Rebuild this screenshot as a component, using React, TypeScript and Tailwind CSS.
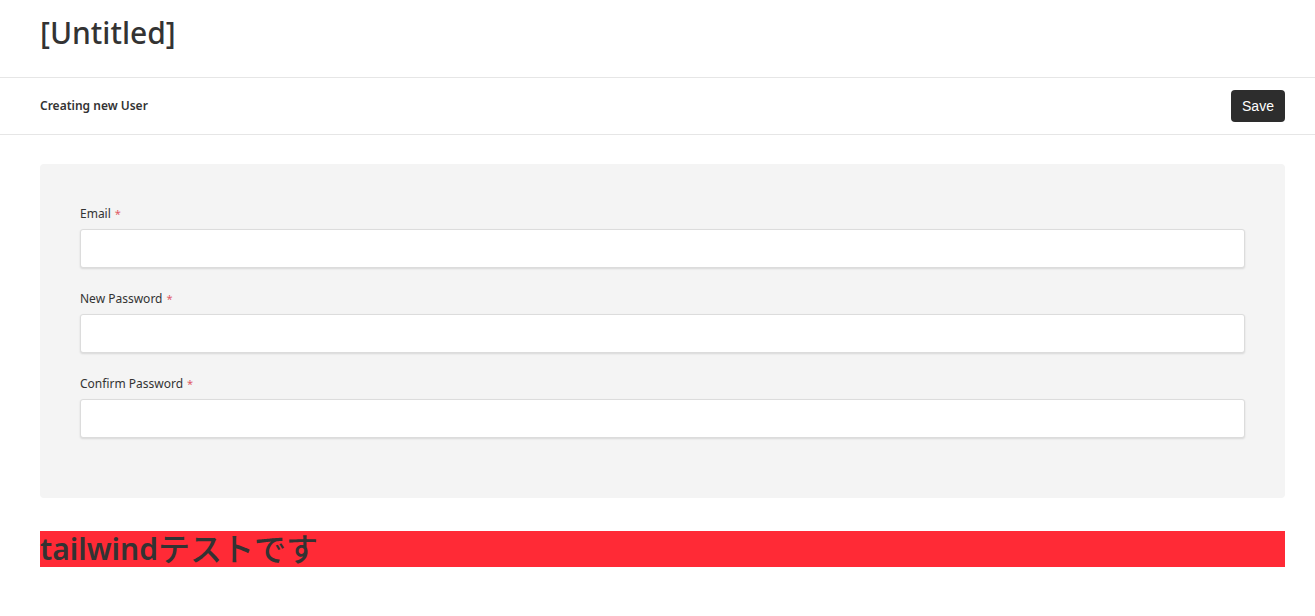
import React from "react";

function Field({ label, type }: { label: string; type: string }) {
  return (
    <div className="mb-[21px]">
      <label className="block h-[20px] text-[12px] leading-[20px] text-[#333]">
        {label}
        <span className="ml-[4px] text-[11px] text-[#e05a66]">*</span>
      </label>
      <input
        type={type}
        className="mt-[5px] block h-[39px] w-full rounded-[3px] border border-[#dcdcdc] bg-white shadow-[0_1px_2px_rgba(0,0,0,0.12)] outline-none"
      />
    </div>
  );
}

export default function App() {
  return (
    <div className="min-h-[616px] bg-white text-[#333]" style={{ fontFamily: '"Noto Sans", "Noto Sans CJK JP", sans-serif' }}>
      <div className="h-[78px] border-b border-[#e6e6e6] px-[40px] pt-[15px]">
        <h1 className="text-[30px] font-medium leading-[36px] text-[#333]">[Untitled]</h1>
      </div>
      <div className="flex h-[57px] items-center justify-between border-b border-[#e6e6e6] pl-[40px] pr-[30px]">
        <div className="text-[12px] font-semibold text-[#333]">Creating new User</div>
        <button
          className="h-[32px] w-[54px] rounded-[4px] bg-[#2d2d2d] text-[14px] text-white"
          style={{ fontFamily: '"Liberation Sans", Arial, sans-serif' }}
        >
          Save
        </button>
      </div>
      <div className="pl-[40px] pr-[30px] pt-[29px]">
        <div className="rounded-[4px] bg-[#f4f4f4] px-[40px] pb-[39px] pt-[40px]">
          <Field label="Email" type="email" />
          <Field label="New Password" type="password" />
          <Field label="Confirm Password" type="password" />
        </div>
        <div className="mt-[33px] flex h-[36px] items-center whitespace-nowrap bg-[#ff2a36] text-[30px] font-semibold leading-[36px] text-[#333]">
          <span>tailwind</span>
          <span className="text-[32px] font-medium leading-[36px]">テストです</span>
        </div>
      </div>
    </div>
  );
}
